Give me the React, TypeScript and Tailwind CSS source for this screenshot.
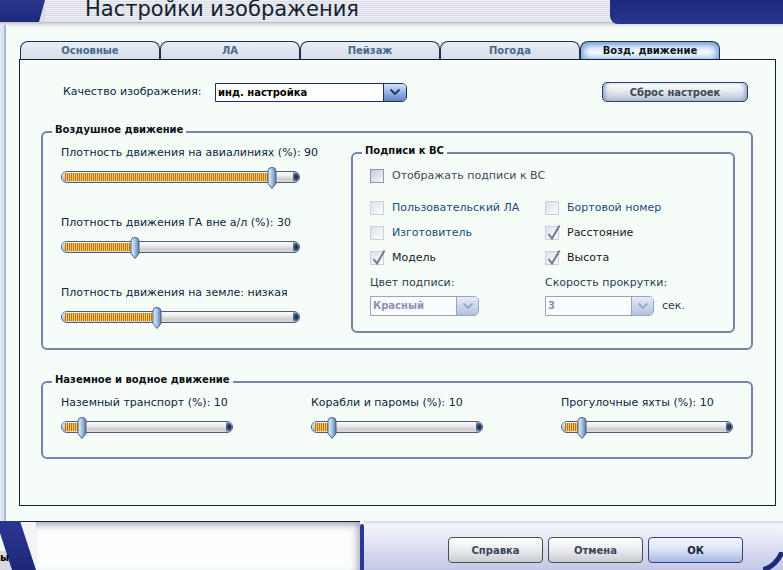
import React from "react";

const bold = "font-['DejaVu_Sans',sans-serif] font-bold text-[10px]";

function Thumb() {
  return (
    <svg width="10" height="22" viewBox="0 0 10 22">
      <defs>
        <linearGradient id="thumbg" x1="0" x2="1" y1="0" y2="0">
          <stop offset="0" stopColor="#e4f2fb" />
          <stop offset="0.45" stopColor="#aecbe6" />
          <stop offset="1" stopColor="#5a7ca6" />
        </linearGradient>
      </defs>
      <path d="M1 4 Q1 .5 5 .5 Q9 .5 9 4 V16.5 L5 21.5 L1 16.5 Z" fill="url(#thumbg)" stroke="#4a6284" />
    </svg>
  );
}

function Slider({ track, pos }: { track: string; pos: number }) {
  return (
    <div className={`relative h-[22px] pt-[4px] ${track}`}>
      <div className="h-[12px] rounded-[6px] border border-[#4d5c7f] bg-[linear-gradient(to_bottom,#fbfbfb_0%,#ededed_35%,#cdcdcd_75%,#dcdcdc_100%)] overflow-hidden flex items-center">
        <div className="w-[3px] h-full bg-[linear-gradient(to_bottom,#e6f0fa,#8fb0d4)]" />
        <div
          className="h-[8px] bg-[repeating-linear-gradient(90deg,#c47400_0px,#c47400_1px,#f2c66a_1px,#f2c66a_2px)]"
          style={{ width: pos - 3 }}
        />
        <div className="ml-auto w-[6px] h-full rounded-r-[5px] bg-[radial-gradient(circle_at_60%_50%,#14233f_0,#3c5478_45%,#c0c7d2_100%)]" />
      </div>
      <div className="absolute top-0" style={{ left: pos - 1 }}>
        <Thumb />
      </div>
    </div>
  );
}

function Box({ dim, checked }: { dim?: boolean; checked?: boolean }) {
  return (
    <span
      className={`relative shrink-0 w-[14px] h-[14px] border ${
        dim
          ? "border-[#cad1dc] bg-[linear-gradient(135deg,#dde2ea,#fbfcfe)]"
          : "border-[#8c97b8] bg-[linear-gradient(135deg,#c5cbdd,#f8f9fc)]"
      }`}
    >
      {checked && (
        <svg className="absolute -top-[3px] left-[1px]" width="14" height="17" viewBox="0 0 14 17">
          <path d="M1.5 10 L5 14.5 L12.5 1.5" fill="none" stroke="#737b86" strokeWidth="2" />
        </svg>
      )}
    </span>
  );
}

function CheckRow({
  label,
  color,
  dim,
  checked,
}: {
  label: string;
  color: string;
  dim?: boolean;
  checked?: boolean;
}) {
  return (
    <div className="flex items-center h-[14px] gap-[8px]">
      <Box dim={dim} checked={checked} />
      <span className={`text-[11px] leading-[14px] ${color}`}>{label}</span>
    </div>
  );
}

function Chevron({ color }: { color: string }) {
  return (
    <svg width="12" height="8" viewBox="0 0 12 8">
      <path d="M1.5 1.5 L6 6 L10.5 1.5" fill="none" stroke={color} strokeWidth="1.8" />
    </svg>
  );
}

function DimSelect({ value }: { value: string }) {
  return (
    <div className="flex h-[20px] w-[109px] border border-[#9aa1c6] rounded-r-[5px] bg-[#fbfcff]">
      <span className={`flex-1 pl-[2px] leading-[18px] text-[#8b91b3] ${bold}`}>{value}</span>
      <span className="w-[22px] border-l border-[#9aa1c6] rounded-r-[4px] bg-[linear-gradient(to_bottom,#e6ecf6,#b4c2dc)] flex items-center justify-center">
        <Chevron color="#9aa4c4" />
      </span>
    </div>
  );
}

function Group({
  title,
  className,
  children,
}: {
  title: string;
  className: string;
  children: React.ReactNode;
}) {
  return (
    <div className={`relative border-2 border-[#7783ad] rounded-[6px] ${className}`}>
      <span className={`absolute -top-[10px] left-[9px] px-[3px] bg-[#f6fdf8] text-[#0c0f14] leading-[14px] ${bold}`}>
        {title}
      </span>
      {children}
    </div>
  );
}

function SliderItem({ label, track, pos }: { label: string; track: string; pos: number }) {
  return (
    <div className="flex flex-col gap-[7px]">
      <span className="text-[11px] leading-[14px] text-[#0c2640] whitespace-nowrap">{label}</span>
      <Slider track={track} pos={pos} />
    </div>
  );
}

const tabs = ["Основные", "ЛА", "Пейзаж", "Погода", "Возд. движение"];

export default function App() {
  return (
    <div className="w-[783px] h-[570px] overflow-hidden flex flex-col bg-[#f6fdf8] font-['DejaVu_Sans',sans-serif]">
      {/* title bar */}
      <div className="h-[22px] shrink-0 flex relative z-10">
        <svg width="45" height="22" viewBox="0 0 45 22" className="shrink-0">
          <defs>
            <linearGradient id="navyg" x1="0" x2="0" y1="0" y2="1">
              <stop offset="0" stopColor="#2a3792" />
              <stop offset="1" stopColor="#1d2878" />
            </linearGradient>
          </defs>
          <rect width="45" height="22" fill="#d9dde6" />
          <path d="M0 0 H45 L39 22 H0 Z" fill="url(#navyg)" />
        </svg>
        <div className="flex-1 overflow-hidden bg-[repeating-linear-gradient(180deg,#eef0f5_0px,#eef0f5_1px,#d8dbe3_1px,#d8dbe3_2px)]">
          <div className="pl-[40px] -mt-[2px] text-[21px] leading-[22px] text-[#122030] whitespace-nowrap">
            Настройки изображения
          </div>
        </div>
        <div className="w-[173px] h-[24px] rounded-bl-[8px] bg-[linear-gradient(to_bottom,#1e2a80,#27358e)]" />
      </div>

      {/* middle */}
      <div className="flex-1 flex bg-[linear-gradient(to_bottom,#b9bdcb_0px,#e3e8ec_3px,#f6fdf8_6px)]">
        <div className="w-[8px] mt-[3px] bg-[linear-gradient(to_right,#e2ebf3_0px,#cfdcea_4px,#97adc6_5px,#97adc6_6px,#ffffff_6px,#ffffff_7px,#e8eef2_8px)]" />
        <div className="flex-1 pl-[11px] pt-[19px]">
          {/* tabs */}
          <div className="flex h-[18px] ml-[1px]">
            {tabs.map((t, i) =>
              i === 4 ? (
                <div
                  key={t}
                  className={`w-[140px] h-full rounded-t-[8px] border border-b-0 border-[#1b3352] text-center leading-[17px] text-[#0c1420] bg-[linear-gradient(to_bottom,#86a9dc_0%,#d8e7f8_35%,#f6f9ff_60%,#c4d9f3_100%)] shadow-[inset_6px_0_6px_-3px_#7ea2d8,inset_-6px_0_6px_-3px_#7ea2d8] ${bold}`}
                >
                  {t}
                </div>
              ) : (
                <div
                  key={t}
                  className={`w-[140px] h-full rounded-t-[8px] border border-b-0 border-[#1b3352] text-center leading-[17px] text-[#46698e] bg-[linear-gradient(to_bottom,#e9eef4,#d6dee8)] ${bold}`}
                >
                  {t}
                </div>
              )
            )}
          </div>

          {/* panel */}
          <div className="w-[757px] h-[447px] border border-[#0f2238] bg-[#f6fdf8]">
            {/* quality row */}
            <div className="flex items-center h-[20px] mt-[22px] pl-[43px] pr-[27px]">
              <span className="w-[152px] text-[11px] text-[#0c2640]">Качество изображения:</span>
              <div className="flex h-[19px] w-[192px] border border-[#1e2c6a] rounded-r-[5px] bg-white">
                <span className={`flex-1 pl-[2px] leading-[17px] text-black ${bold}`}>инд. настройка</span>
                <span className="w-[23px] rounded-r-[4px] border-l border-[#1e2c6a] bg-[linear-gradient(to_bottom,#d4e4f8,#8eaee0_55%,#5f84c4)] flex items-center justify-center">
                  <Chevron color="#1c3470" />
                </span>
              </div>
              <button
                className={`ml-auto w-[146px] h-[20px] rounded-[5px] border border-[#2e3e66] text-[#3e4856] bg-[linear-gradient(to_bottom,#ffffff_0%,#e6ebf2_45%,#b2c0d6_100%)] shadow-[inset_4px_0_4px_-2px_#8fa0c0,inset_-4px_0_4px_-2px_#8fa0c0] ${bold}`}
              >
                Сброс настроек
              </button>
            </div>

            {/* air traffic group */}
            <Group title="Воздушное движение" className="mt-[29px] ml-[21px] w-[712px] h-[219px]">
              <div className="flex pl-[18px] pt-[13px]">
                <div className="w-[239px] flex flex-col gap-[27px]">
                  <SliderItem label="Плотность движения на авиалиниях (%): 90" track="w-[239px]" pos={207} />
                  <SliderItem label="Плотность движения ГА вне а/л (%): 30" track="w-[239px]" pos={70} />
                  <SliderItem label="Плотность движения на земле: низкая" track="w-[239px]" pos={92} />
                </div>
                <Group title="Подписи к ВС" className="ml-[51px] mt-[6px] w-[384px] h-[181px]">
                  <div className="pl-[17px] pt-[15px] flex flex-col">
                    <CheckRow label="Отображать подписи к ВС" color="text-[#3c4a5c]" />
                    <div className="flex mt-[18px]">
                      <div className="w-[175px] flex flex-col gap-[11px]">
                        <CheckRow label="Пользовательский ЛА" color="text-[#1c4a7c]" dim />
                        <CheckRow label="Изготовитель" color="text-[#1c4a7c]" dim />
                        <CheckRow label="Модель" color="text-[#16181c]" dim checked />
                        <div className="flex flex-col gap-[6px]">
                          <span className="text-[11px] leading-[14px] text-[#2a3e55]">Цвет подписи:</span>
                          <DimSelect value="Красный" />
                        </div>
                      </div>
                      <div className="flex flex-col gap-[11px]">
                        <CheckRow label="Бортовой номер" color="text-[#1c4a7c]" dim />
                        <CheckRow label="Расстояние" color="text-[#16181c]" dim checked />
                        <CheckRow label="Высота" color="text-[#16181c]" dim checked />
                        <div className="flex flex-col gap-[6px]">
                          <span className="text-[11px] leading-[14px] text-[#2a3e55]">Скорость прокрутки:</span>
                          <div className="flex items-center gap-[8px]">
                            <DimSelect value="3" />
                            <span className="text-[11px] text-[#2a3e55]">сек.</span>
                          </div>
                        </div>
                      </div>
                    </div>
                  </div>
                </Group>
              </div>
            </Group>

            {/* ground and water group */}
            <Group title="Наземное и водное движение" className="mt-[31px] ml-[21px] w-[712px] h-[78px]">
              <div className="flex pl-[18px] pt-[13px]">
                <div className="w-[250px]">
                  <SliderItem label="Наземный транспорт (%): 10" track="w-[172px]" pos={17} />
                </div>
                <div className="w-[250px]">
                  <SliderItem label="Корабли и паромы (%): 10" track="w-[172px]" pos={17} />
                </div>
                <div className="w-[172px]">
                  <SliderItem label="Прогулочные яхты (%): 10" track="w-[172px]" pos={17} />
                </div>
              </div>
            </Group>
          </div>
        </div>
      </div>

      {/* bottom bar */}
      <div className="h-[49px] shrink-0 flex">
        <div className="relative w-[36px] h-full shrink-0">
          <svg width="36" height="49" viewBox="0 0 36 49" className="absolute inset-0">
            <rect x="0" y="0" width="36" height="49" fill="#f6fdf8" />
            <rect x="0" y="30" width="11" height="19" fill="#d6dae0" />
            <path d="M20 0 H36 V49 Z" fill="#f2f3f8" />
            <path d="M20 .5 H36" stroke="#1a2030" />
            <path d="M0 0 H20 L36 49 H12 L0 12 Z" fill="url(#navyg)" />
          </svg>
          <span className={`absolute left-0 bottom-[6px] text-black leading-[12px] ${bold}`}>ы</span>
        </div>
        <div className="w-[324px] h-full border-t border-[#1a2030] bg-[#fbfefc] shadow-[inset_0_7px_7px_-4px_#a4a8bc,inset_-7px_0_7px_-4px_#aeb2c4]" />
        <div className="w-[4px] mt-[3px] rounded-t-[2px] bg-[#2a3890]" />
        <div className="relative flex-1 h-full bg-[linear-gradient(to_bottom,#d4d6e2_0px,#f4f5fa_4px,#eceef8_12px,#c4c8e6_100%)]">
          <div className="flex gap-[5px] pl-[84px] pt-[16px]">
            <button
              className={`w-[95px] h-[26px] rounded-[4px] border border-[#4a4c52] text-[#3a4656] bg-[linear-gradient(to_bottom,#ffffff_0%,#eceef2_45%,#c9ccd4_100%)] ${bold}`}
            >
              Справка
            </button>
            <button
              className={`w-[95px] h-[26px] rounded-[4px] border border-[#4a4c52] text-[#3a4656] bg-[linear-gradient(to_bottom,#ffffff_0%,#eceef2_45%,#c9ccd4_100%)] ${bold}`}
            >
              Отмена
            </button>
            <button
              className={`w-[95px] h-[26px] rounded-[4px] border border-[#33437e] text-[#1c2434] bg-[linear-gradient(to_bottom,#f4f7fd_0%,#dde5f6_45%,#a9b8e0_100%)] ${bold}`}
            >
              ОК
            </button>
          </div>
          <svg width="20" height="18" viewBox="0 0 20 18" className="absolute right-0 bottom-0">
            <path d="M0 18 Q13 14 19 0" fill="none" stroke="#1e2a80" strokeWidth="5" />
          </svg>
        </div>
      </div>
    </div>
  );
}
